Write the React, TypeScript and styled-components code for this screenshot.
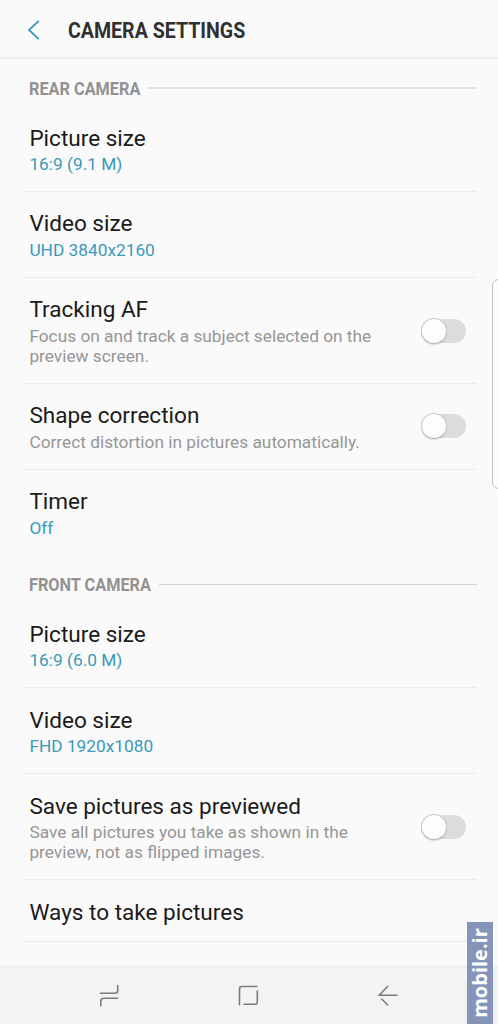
import React from 'react';
import styled, { createGlobalStyle } from 'styled-components';

const GlobalStyle = createGlobalStyle`
  * { box-sizing: border-box; }
  body {
    margin: 0;
    background: #fafafa;
    font-family: Roboto, 'Liberation Sans', sans-serif;
    overflow: hidden;
  }
`;

const Screen = styled.div`
  position: relative;
  display: flex;
  flex-direction: column;
  width: 498px;
  height: 1024px;
  overflow: hidden;
  background: #fafafa;
`;

const Header = styled.header`
  display: flex;
  align-items: center;
  flex: none;
  height: 59px;
  padding: 1px 0 0 27px;
  border-bottom: 2px solid #efefef;
`;

const BackIcon = styled.svg`
  flex: none;
  width: 14px;
  height: 20px;
  margin: 1px 27px 0 0;
`;

const Title = styled.h1`
  margin: 2px 0 0;
  font-size: 22.5px;
  line-height: 28px;
  font-weight: 700;
  color: #303030;
  white-space: nowrap;
  transform: scaleX(0.87);
  transform-origin: 0 50%;
`;

const Content = styled.main`
  flex: 1;
  min-height: 0;
  overflow: hidden;
`;

const SectionHead = styled.div<{ $height: number }>`
  display: flex;
  align-items: center;
  height: ${(p) => p.$height}px;
  padding: 12px 21px 0 29px;
`;

const SectionTitle = styled.h2<{ $width: number }>`
  flex: none;
  width: ${(p) => p.$width}px;
  margin: 0;
  font-size: 18.5px;
  line-height: 22px;
  font-weight: 700;
  color: #929292;
  white-space: nowrap;

  span {
    display: inline-block;
    transform: scaleX(0.88);
    transform-origin: 0 50%;
  }
`;

const SectionRule = styled.div<{ $thick?: boolean }>`
  flex: 1;
  height: ${(p) => (p.$thick ? 2 : 1)}px;
  margin-top: -1px;
  background: ${(p) => (p.$thick ? '#e3e3e3' : '#d4d4d4')};
`;

const Row = styled.div<{ $height: number; $last?: boolean }>`
  display: flex;
  justify-content: space-between;
  height: ${(p) => p.$height}px;
  margin: 0 22px;
  padding: 19.6px 10px 0 7.4px;
  border-bottom: 1px solid ${(p) => (p.$last ? 'transparent' : '#ebebeb')};
`;

const RowText = styled.div`
  width: 360px;
`;

const RowTitle = styled.div`
  font-size: 22.55px;
  line-height: 26px;
  color: #1b1b1b;
  white-space: nowrap;
`;

const RowNote = styled.div<{ $accent?: boolean }>`
  margin-top: 2.4px;
  font-size: 17.3px;
  line-height: 20px;
  color: ${(p) => (p.$accent ? '#3b99ba' : '#969696')};
  white-space: pre;
`;

const Switch = styled.div`
  align-self: center;
  flex: none;
  display: flex;
  align-items: center;
  width: 45px;
  height: 24px;
  margin-top: -19px;
  border-radius: 12px;
  background: #dcdcdc;
`;

const Knob = styled.div`
  flex: none;
  width: 26px;
  height: 26px;
  border: 1px solid #c9c9c9;
  border-bottom-color: #b8b8b8;
  border-radius: 50%;
  background: #fdfdfd;
  box-shadow: 0 1px 1px rgba(0, 0, 0, 0.12);
`;

const NavBar = styled.nav`
  display: flex;
  align-items: center;
  justify-content: space-between;
  flex: none;
  height: 59px;
  padding: 1px 99px 0 98px;
  background: #f3f3f3;
`;

const NavIcon = styled.svg`
  width: 22px;
  height: 24px;
  fill: none;
  stroke: #7c7c7c;
  stroke-width: 1.6;
  stroke-linecap: round;
`;

const EdgeHandle = styled.div`
  position: absolute;
  top: 279px;
  right: -10px;
  width: 16px;
  height: 210px;
  border: 1px solid #c4c4c4;
  border-radius: 7px;
  background: #fcfcfc;
`;

const Watermark = styled.div`
  position: absolute;
  right: 5px;
  bottom: 0;
  display: flex;
  align-items: center;
  justify-content: center;
  width: 26px;
  height: 102px;
  background: #8595b9;
  color: #fff;
  font: 700 20px/26px 'Open Sans', sans-serif;
`;

const WatermarkText = styled.span`
  flex: none;
  white-space: nowrap;
  transform: rotate(-90deg);
`;

type Item = { title: string; note?: string; accent?: boolean; toggle?: boolean; height: number; last?: boolean };

const rear: Item[] = [
  { title: 'Picture size', note: '16:9 (9.1 M)', accent: true, height: 85.9 },
  { title: 'Video size', note: 'UHD 3840x2160', accent: true, height: 85.9 },
  { title: 'Tracking AF', note: 'Focus on and track a subject selected on the\npreview screen.', toggle: true, height: 105.9 },
  { title: 'Shape correction', note: 'Correct distortion in pictures automatically.', toggle: true, height: 85.9 },
  { title: 'Timer', note: 'Off', accent: true, height: 85.9, last: true },
];

const front: Item[] = [
  { title: 'Picture size', note: '16:9 (6.0 M)', accent: true, height: 86 },
  { title: 'Video size', note: 'FHD 1920x1080', accent: true, height: 86 },
  { title: 'Save pictures as previewed', note: 'Save all pictures you take as shown in the\npreview, not as flipped images.', toggle: true, height: 106 },
  { title: 'Ways to take pictures', height: 62 },
];

const Rows = ({ items }: { items: Item[] }) => (
  <>
    {items.map((item) => (
      <Row key={item.title} $height={item.height} $last={item.last}>
        <RowText>
          <RowTitle>{item.title}</RowTitle>
          {item.note && <RowNote $accent={item.accent}>{item.note}</RowNote>}
        </RowText>
        {item.toggle && (
          <Switch>
            <Knob />
          </Switch>
        )}
      </Row>
    ))}
  </>
);

export default function App() {
  return (
    <Screen>
      <GlobalStyle />
      <Header>
        <BackIcon viewBox="0 0 14 20" fill="none" stroke="#3798bb" strokeWidth="1.8">
          <path d="M11.8 0.8 L2 10 L11.8 19.2" />
        </BackIcon>
        <Title>CAMERA SETTINGS</Title>
      </Header>
      <Content>
        <SectionHead $height={47}>
          <SectionTitle $width={119}><span>REAR CAMERA</span></SectionTitle>
          <SectionRule $thick />
        </SectionHead>
        <Rows items={rear} />
        <SectionHead $height={46.5}>
          <SectionTitle $width={130}><span>FRONT CAMERA</span></SectionTitle>
          <SectionRule />
        </SectionHead>
        <Rows items={front} />
      </Content>
      <NavBar>
        <NavIcon viewBox="0 0 22 24">
          <path d="M2.5 10.3 H16.5 Q19.7 10.3 19.7 7.5 V2.5" />
          <path d="M19.5 15.2 H6 Q2.8 15.2 2.8 18 V22.8" />
        </NavIcon>
        <NavIcon viewBox="0 0 22 24">
          <path d="M1.5 21.8 V5.8 Q1.5 3.5 3.8 3.5 H19" />
          <path d="M19.3 8 V18.9 Q19.3 21.2 17 21.2 H6" />
        </NavIcon>
        <NavIcon viewBox="0 0 22 24">
          <path d="M20 12.3 H2.3 L10.7 3.3" />
          <path d="M4.8 16 L10.7 22" />
        </NavIcon>
      </NavBar>
      <EdgeHandle />
      <Watermark>
        <WatermarkText>mobile.ir</WatermarkText>
      </Watermark>
    </Screen>
  );
}
